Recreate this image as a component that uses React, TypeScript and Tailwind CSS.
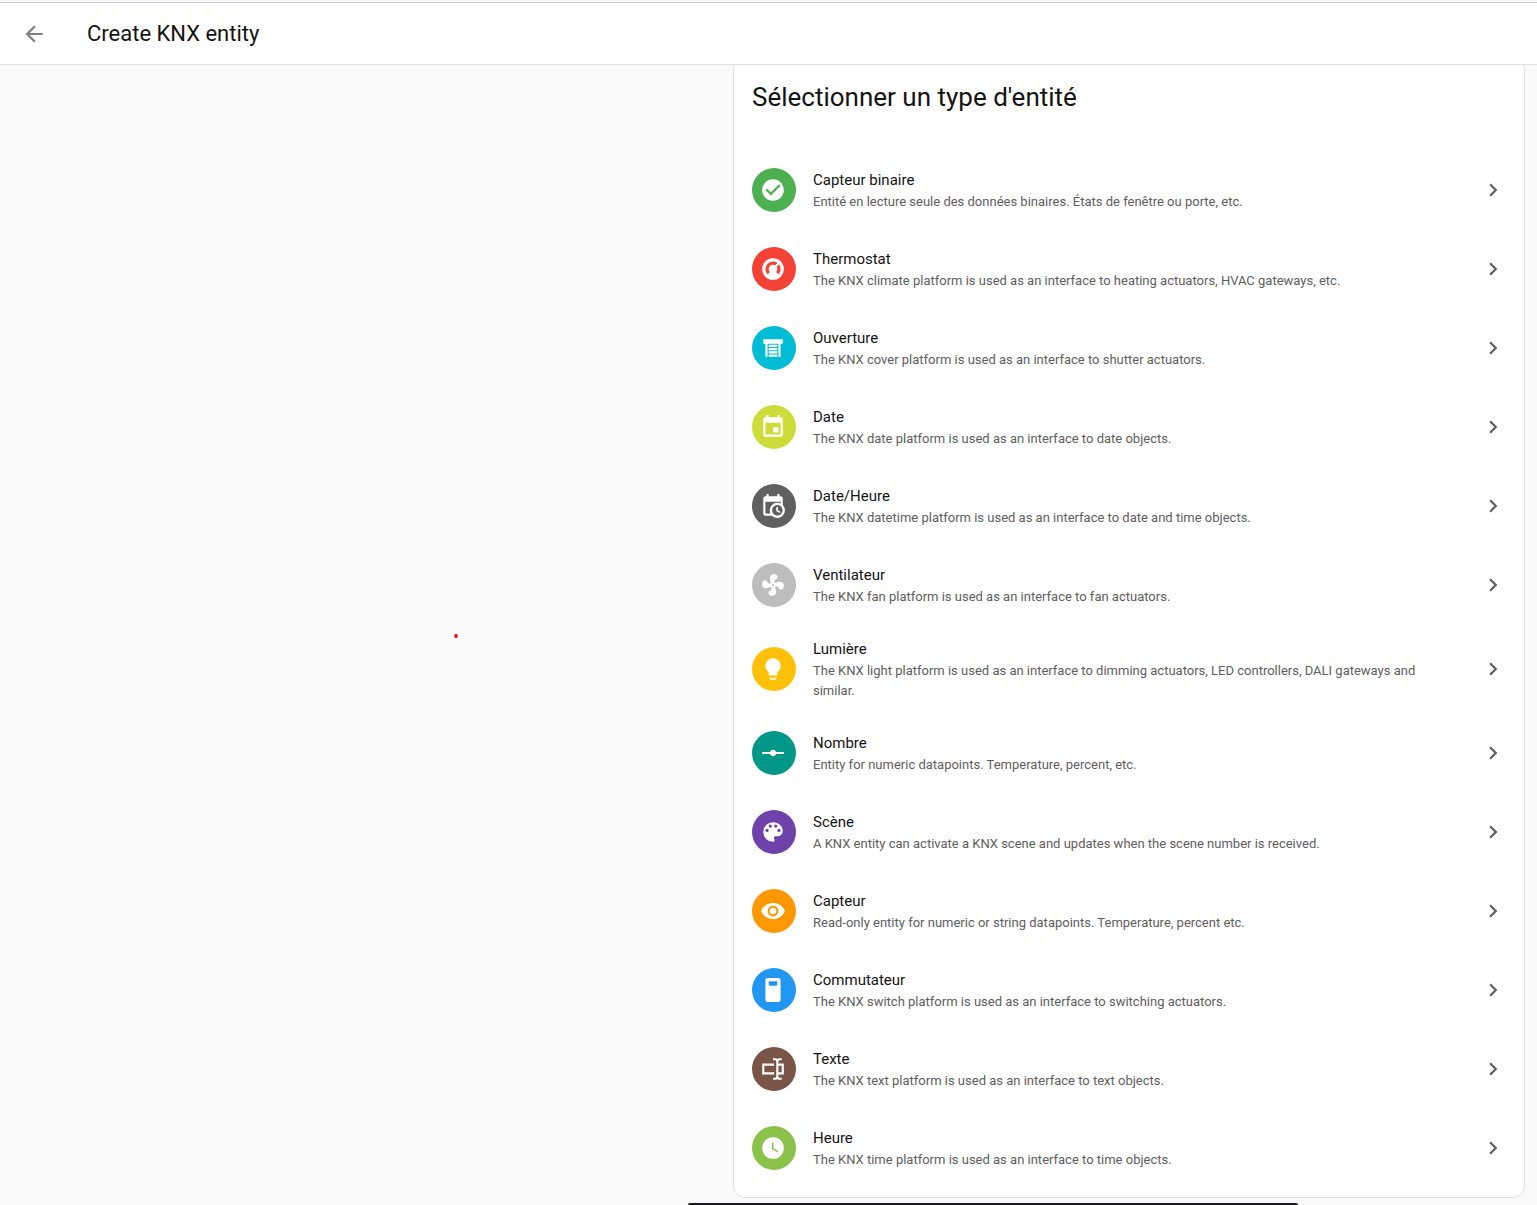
import clsx from 'clsx';

interface EntityType {
  name: string;
  description: string;
  color: string;
  path: string;
}

const ARROW_LEFT = 'M20,11V13H8L13.5,18.5L12.08,19.92L4.16,12L12.08,4.08L13.5,5.5L8,11H20Z';
const CHEVRON_RIGHT = 'M8.59,16.58L13.17,12L8.59,7.41L10,6L16,12L10,18L8.59,16.58Z';

const entityTypes: EntityType[] = [
  {
    name: 'Capteur binaire',
    description: 'Entité en lecture seule des données binaires. États de fenêtre ou porte, etc.',
    color: 'bg-[#4caf50]',
    path: 'M12 2C6.5 2 2 6.5 2 12S6.5 22 12 22 22 17.5 22 12 17.5 2 12 2M10 17L5 12L6.41 10.59L10 14.17L17.59 6.58L19 8L10 17Z',
  },
  {
    name: 'Thermostat',
    description: 'The KNX climate platform is used as an interface to heating actuators, HVAC gateways, etc.',
    color: 'bg-[#f44336]',
    path: 'M16.95,16.95L14.83,14.83C15.55,14.1 16,13.1 16,12C16,11.26 15.79,10.57 15.43,10L17.6,7.81C18.5,9 19,10.43 19,12C19,13.93 18.22,15.68 16.95,16.95M12,5C13.57,5 15,5.5 16.19,6.4L14,8.56C13.43,8.21 12.74,8 12,8A4,4 0 0,0 8,12C8,13.1 8.45,14.1 9.17,14.83L7.05,16.95C5.78,15.68 5,13.93 5,12A7,7 0 0,1 12,5M12,2A10,10 0 0,0 2,12A10,10 0 0,0 12,22A10,10 0 0,0 22,12A10,10 0 0,0 12,2Z',
  },
  {
    name: 'Ouverture',
    description: 'The KNX cover platform is used as an interface to shutter actuators.',
    color: 'bg-[#00bcd4]',
    path: 'M3 4H21V8H19V20H17V8H7V20H5V8H3V4M8 9H16V11H8V9M8 12H16V14H8V12M8 15H16V17H8V15M8 18H16V20H8V18Z',
  },
  {
    name: 'Date',
    description: 'The KNX date platform is used as an interface to date objects.',
    color: 'bg-[#cddc39]',
    path: 'M19,19H5V8H19M16,1V3H8V1H6V3H5C3.89,3 3,3.89 3,5V19A2,2 0 0,0 5,21H19A2,2 0 0,0 21,19V5C21,3.89 20.1,3 19,3H18V1M17,12H12V17H17V12Z',
  },
  {
    name: 'Date/Heure',
    description: 'The KNX datetime platform is used as an interface to date and time objects.',
    color: 'bg-[#606060]',
    path: 'M15,13H16.5V15.82L18.94,17.23L18.19,18.53L15,16.69V13M19,8H5V19H9.67C9.24,18.09 9,17.07 9,16A7,7 0 0,1 16,9C17.07,9 18.09,9.24 19,9.67V8M5,21C3.89,21 3,20.1 3,19V5C3,3.89 3.89,3 5,3H6V1H8V3H16V1H18V3H19A2,2 0 0,1 21,5V11.1C22.24,12.36 23,14.09 23,16A7,7 0 0,1 16,23C14.09,23 12.36,22.24 11.1,21H5M16,11.15A4.85,4.85 0 0,0 11.15,16C11.15,18.68 13.32,20.85 16,20.85A4.85,4.85 0 0,0 20.85,16C20.85,13.32 18.68,11.15 16,11.15Z',
  },
  {
    name: 'Ventilateur',
    description: 'The KNX fan platform is used as an interface to fan actuators.',
    color: 'bg-[#bdbdbd]',
    path: 'M12,11A1,1 0 0,0 11,12A1,1 0 0,0 12,13A1,1 0 0,0 13,12A1,1 0 0,0 12,11M12.5,2C17,2 17.11,5.57 14.75,6.75C13.76,7.24 13.32,8.29 13.13,9.22C13.61,9.42 14.03,9.73 14.35,10.13C18.05,8.13 22.03,8.92 22.03,12.5C22.03,17 18.46,17.1 17.28,14.73C16.78,13.74 15.72,13.3 14.79,13.11C14.59,13.59 14.28,14 13.88,14.34C15.87,18.03 15.08,22 11.5,22C7,22 6.91,18.42 9.27,17.24C10.25,16.75 10.69,15.71 10.89,14.79C10.4,14.59 9.97,14.27 9.65,13.87C5.96,15.85 2,15.07 2,11.5C2,7 5.56,6.89 6.74,9.26C7.24,10.25 8.29,10.68 9.22,10.87C9.41,10.39 9.73,9.97 10.14,9.65C8.15,5.96 8.94,2 12.5,2Z',
  },
  {
    name: 'Lumière',
    description: 'The KNX light platform is used as an interface to dimming actuators, LED controllers, DALI gateways and similar.',
    color: 'bg-[#ffc107]',
    path: 'M12,2A7,7 0 0,0 5,9C5,11.38 6.19,13.47 8,14.74V17A1,1 0 0,0 9,18H15A1,1 0 0,0 16,17V14.74C17.81,13.47 19,11.38 19,9A7,7 0 0,0 12,2M9,21A1,1 0 0,0 10,22H14A1,1 0 0,0 15,21V20H9V21Z',
  },
  {
    name: 'Nombre',
    description: 'Entity for numeric datapoints. Temperature, percent, etc.',
    color: 'bg-[#009688]',
    path: 'M2,11H9.17C9.58,9.83 10.69,9 12,9C13.31,9 14.42,9.83 14.83,11H22V13H14.83C14.42,14.17 13.31,15 12,15C10.69,15 9.58,14.17 9.17,13H2V11Z',
  },
  {
    name: 'Scène',
    description: 'A KNX entity can activate a KNX scene and updates when the scene number is received.',
    color: 'bg-[#6e41ab]',
    path: 'M17.5,12A1.5,1.5 0 0,1 16,10.5A1.5,1.5 0 0,1 17.5,9A1.5,1.5 0 0,1 19,10.5A1.5,1.5 0 0,1 17.5,12M14.5,8A1.5,1.5 0 0,1 13,6.5A1.5,1.5 0 0,1 14.5,5A1.5,1.5 0 0,1 16,6.5A1.5,1.5 0 0,1 14.5,8M9.5,8A1.5,1.5 0 0,1 8,6.5A1.5,1.5 0 0,1 9.5,5A1.5,1.5 0 0,1 11,6.5A1.5,1.5 0 0,1 9.5,8M6.5,12A1.5,1.5 0 0,1 5,10.5A1.5,1.5 0 0,1 6.5,9A1.5,1.5 0 0,1 8,10.5A1.5,1.5 0 0,1 6.5,12M12,3A9,9 0 0,0 3,12A9,9 0 0,0 12,21A1.5,1.5 0 0,0 13.5,19.5C13.5,19.11 13.35,18.76 13.11,18.5C12.88,18.23 12.73,17.88 12.73,17.5A1.5,1.5 0 0,1 14.23,16H16A5,5 0 0,0 21,11C21,6.58 16.97,3 12,3Z',
  },
  {
    name: 'Capteur',
    description: 'Read-only entity for numeric or string datapoints. Temperature, percent etc.',
    color: 'bg-[#ff9800]',
    path: 'M12,9A3,3 0 0,0 9,12A3,3 0 0,0 12,15A3,3 0 0,0 15,12A3,3 0 0,0 12,9M12,17A5,5 0 0,1 7,12A5,5 0 0,1 12,7A5,5 0 0,1 17,12A5,5 0 0,1 12,17M12,4.5C7,4.5 2.73,7.61 1,12C2.73,16.39 7,19.5 12,19.5C17,19.5 21.27,16.39 23,12C21.27,7.61 17,4.5 12,4.5Z',
  },
  {
    name: 'Commutateur',
    description: 'The KNX switch platform is used as an interface to switching actuators.',
    color: 'bg-[#2196f3]',
    path: 'M17 1H7C5.9 1 5 1.9 5 3V21C5 22.1 5.9 23 7 23H17C18.1 23 19 22.1 19 21V3C19 1.9 18.1 1 17 1M16 7C16 7.55 15.55 8 15 8H9C8.45 8 8 7.55 8 7V5C8 4.45 8.45 4 9 4H15C15.55 4 16 4.45 16 5V7Z',
  },
  {
    name: 'Texte',
    description: 'The KNX text platform is used as an interface to text objects.',
    color: 'bg-[#795548]',
    path: 'M17,7H22V17H17V19A1,1 0 0,0 18,20H20V22H17.5C16.95,22 16,21.55 16,21C16,21.55 15.05,22 14.5,22H12V20H14A1,1 0 0,0 15,19V5A1,1 0 0,0 14,4H12V2H14.5C15.05,2 16,2.45 16,3C16,2.45 16.95,2 17.5,2H20V4H18A1,1 0 0,0 17,5V7M2,7H13V9H4V15H13V17H2V7M20,15V9H17V15H20Z',
  },
  {
    name: 'Heure',
    description: 'The KNX time platform is used as an interface to time objects.',
    color: 'bg-[#8bc34a]',
    path: 'M12,2A10,10 0 0,0 2,12A10,10 0 0,0 12,22A10,10 0 0,0 22,12A10,10 0 0,0 12,2M16.2,16.2L11,13V7H12.5V12.2L17,14.9L16.2,16.2Z',
  },
];

function Icon({ path, className }: { path: string; className?: string }) {
  return (
    <svg viewBox="0 0 24 24" aria-hidden="true" className={clsx('size-[26px] shrink-0 fill-current', className)}>
      <path fillRule="evenodd" d={path} />
    </svg>
  );
}

function EntityRow({ entity }: { entity: EntityType }) {
  return (
    <li>
      <a href="#" className="flex min-h-[79px] items-center px-[18px] pt-3 pb-[13px] hover:bg-gray-50">
        <span className={clsx('flex size-11 shrink-0 items-center justify-center rounded-full pr-0.5 pb-px text-white', entity.color)}>
          <Icon path={entity.path} />
        </span>
        <span className="ml-[17px] mr-8 flex-1">
          <span className="block text-[15px] leading-6 text-[#141414]">{entity.name}</span>
          <span className="block text-[13px] leading-5 text-[#5e5e5e]">{entity.description}</span>
        </span>
        <Icon path={CHEVRON_RIGHT} className="text-[#5e5e5e]" />
      </a>
    </li>
  );
}

export default function App() {
  return (
    <div className="relative flex min-h-screen flex-col bg-[#fafafa] font-[Roboto,sans-serif]">
      <header className="relative z-10 border-b border-[#e0e0e0] bg-[#f8f9fa] pt-0.5">
        <div className="flex h-[62px] items-center border-t border-[#c7cacd] bg-white px-[21px]">
          <button type="button" aria-label="Retour" className="text-[#7f7f7f]">
            <Icon path={ARROW_LEFT} />
          </button>
          <h1 className="ml-10 text-[22px] leading-7 text-[#141414]">Create KNX entity</h1>
        </div>
      </header>

      <main className="flex justify-end pr-3 pb-[7px]">
        <section className="-mt-2 w-full max-w-[792px] rounded-xl border border-[#e0e0e0] bg-white pb-[9px]">
          <h2 className="px-[18px] pt-[19px] pb-[34px] text-[26px] leading-10 text-[#141414]">Sélectionner un type d'entité</h2>
          <ul>
            {entityTypes.map((entity) => (
              <EntityRow key={entity.name} entity={entity} />
            ))}
          </ul>
        </section>
      </main>

      {/* Pointer mark */}
      <span className="absolute left-[454px] top-[634px] size-1 rounded-full bg-[#f01820]" />
      {/* Top edge of the snackbar */}
      <div className="absolute bottom-0 left-[688px] h-0.5 w-[610px] rounded-t-sm bg-[#1c1b1f]" />
    </div>
  );
}
